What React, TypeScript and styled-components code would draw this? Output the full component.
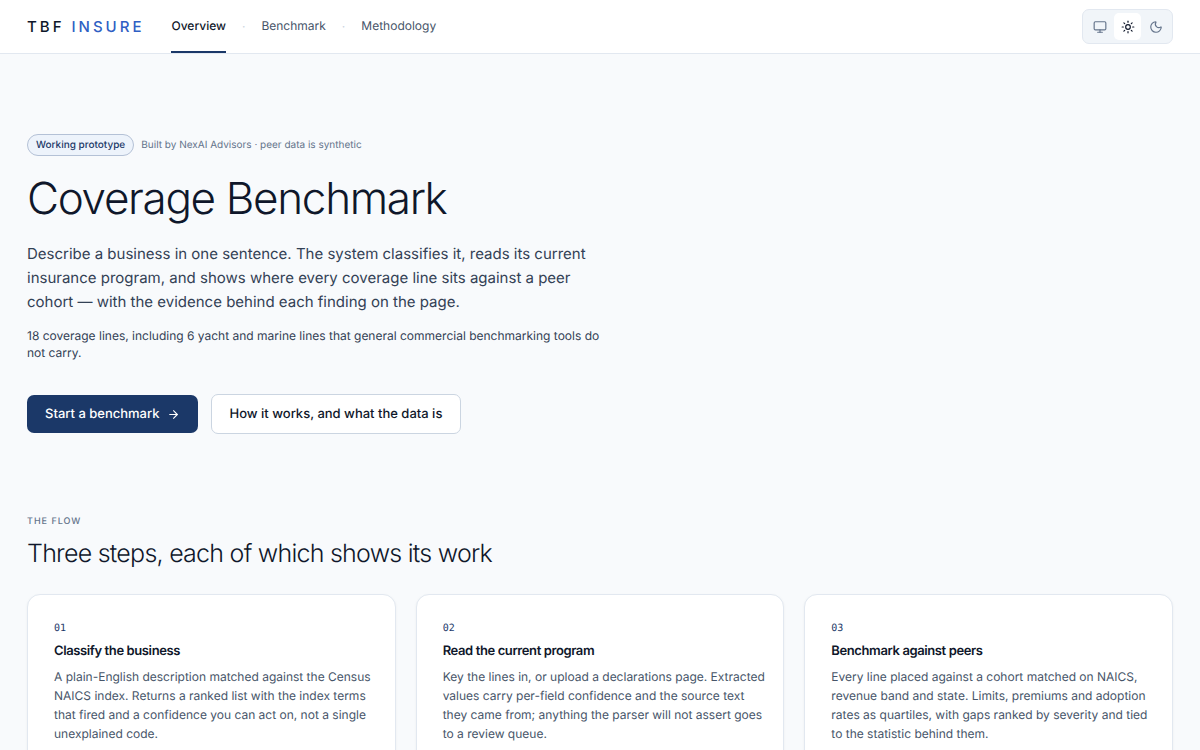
import React, { useState } from "react";
import styled, { createGlobalStyle } from "styled-components";
import { ArrowRight, Monitor, Moon, Sun } from "lucide-react";

const GlobalStyle = createGlobalStyle`
  *, *::before, *::after { box-sizing: border-box; }
  body {
    margin: 0;
    background: #f8fafc;
    color: #0f172a;
    font-family: Inter, "Liberation Sans", sans-serif;
    font-size: 12px;
    text-rendering: geometricPrecision;
  }
  h1, h2, h3, p { margin: 0; }
  h1, h2, h3 { letter-spacing: -0.03em; }
  a { color: inherit; text-decoration: none; }
`;

const Header = styled.header`
  display: flex;
  align-items: stretch;
  height: 54px;
  padding: 0 27px;
  background: #ffffff;
  border-bottom: 1px solid #e2e8f0;
`;

const Brand = styled.a`
  display: flex;
  align-items: center;
  gap: 7px;
  margin-right: 27px;
  font-size: 15px;
  font-weight: 500;
  letter-spacing: 3px;
`;

const BrandAccent = styled.span`
  color: #2f5fc4;
`;

const Nav = styled.nav`
  display: flex;
  align-items: stretch;
  gap: 16px;
`;

const NavLink = styled.a<{ $active?: boolean }>`
  display: flex;
  align-items: center;
  border-bottom: 2px solid ${(p) => (p.$active ? "#1b3868" : "transparent")};
  color: ${(p) => (p.$active ? "#0f172a" : "#475569")};
  font-size: 12px;
  font-weight: ${(p) => (p.$active ? 500 : 400)};
`;

const NavDot = styled.span`
  align-self: center;
  color: #cbd5e1;
`;

const ThemeSwitch = styled.div`
  display: flex;
  align-self: center;
  gap: 1px;
  margin-left: auto;
  padding: 3px;
  border: 1px solid #e2e8f0;
  border-radius: 7px;
  background: #f1f5f9;
`;

const ThemeButton = styled.button<{ $active: boolean }>`
  display: flex;
  align-items: center;
  justify-content: center;
  width: 27px;
  height: 27px;
  padding: 0;
  border: 0;
  border-radius: 5px;
  background: ${(p) => (p.$active ? "#ffffff" : "transparent")};
  color: ${(p) => (p.$active ? "#0f172a" : "#64748b")};
  cursor: pointer;
`;

const Main = styled.main`
  padding: 80px 27px;
`;

const Hero = styled.section`
  max-width: 580px;
  margin-bottom: 81px;
`;

const Notice = styled.div`
  display: flex;
  align-items: center;
  gap: 7px;
  color: #64748b;
  font-size: 10px;
  line-height: 14px;
`;

const Pill = styled.span`
  padding: 3px 8px;
  border: 1px solid #b4c1d6;
  border-radius: 11px;
  background: #edf3fb;
  color: #1b3868;
  font-weight: 500;
`;

const Title = styled.h1`
  margin-top: 18px;
  font-size: 44px;
  font-weight: 300;
  line-height: 48px;
`;

const Lead = styled.p`
  margin-top: 20px;
  color: #334155;
  font-size: 15px;
  line-height: 24px;
`;

const Note = styled.p`
  margin-top: 13px;
  color: #334155;
  line-height: 17px;
`;

const Actions = styled.div`
  display: flex;
  align-items: center;
  gap: 13px;
  margin-top: 33px;
`;

const ActionLink = styled.a<{ $primary?: boolean }>`
  display: flex;
  align-items: center;
  gap: 7px;
  padding: 10px 18px;
  border: ${(p) => (p.$primary ? "0" : "1px solid #cbd5e1")};
  border-radius: 7px;
  background: ${(p) => (p.$primary ? "#1b3868" : "#ffffff")};
  color: ${(p) => (p.$primary ? "#ffffff" : "#0f172a")};
  font-size: 13px;
  font-weight: 500;
  line-height: 18px;
`;

const Eyebrow = styled.p`
  color: #64748b;
  font-size: 9px;
  font-weight: 500;
  line-height: 14px;
  letter-spacing: 1px;
`;

const SectionTitle = styled.h2`
  margin-top: 8px;
  font-size: 25px;
  font-weight: 300;
  line-height: 34px;
`;

const Steps = styled.div`
  display: grid;
  grid-template-columns: repeat(3, 1fr);
  gap: 20px;
  margin-top: 23px;
`;

const Card = styled.article`
  padding: 26px 16px 26px 26px;
  border: 1px solid #e2e8f0;
  border-radius: 13px;
  background: #ffffff;
  box-shadow: 0 1px 3px rgba(15, 23, 42, 0.05);
`;

const StepNumber = styled.p`
  color: #1b3868;
  font-family: "DejaVu Sans Mono", monospace;
  font-size: 10px;
  line-height: 16px;
`;

const CardTitle = styled.h3`
  margin-top: 5px;
  font-size: 13px;
  font-weight: 600;
  line-height: 18px;
`;

const CardText = styled.p`
  margin-top: 7px;
  color: #475569;
  line-height: 19px;
`;

const themes = [
  { name: "System theme", Icon: Monitor },
  { name: "Light theme", Icon: Sun },
  { name: "Dark theme", Icon: Moon },
];

const steps = [
  {
    number: "01",
    title: "Classify the business",
    text: "A plain-English description matched against the Census NAICS index. Returns a ranked list with the index terms that fired and a confidence you can act on, not a single unexplained code.",
  },
  {
    number: "02",
    title: "Read the current program",
    text: "Key the lines in, or upload a declarations page. Extracted values carry per-field confidence and the source text they came from; anything the parser will not assert goes to a review queue.",
  },
  {
    number: "03",
    title: "Benchmark against peers",
    text: "Every line placed against a cohort matched on NAICS, revenue band and state. Limits, premiums and adoption rates as quartiles, with gaps ranked by severity and tied to the statistic behind them.",
  },
];

export default function App() {
  const [theme, setTheme] = useState("Light theme");

  return (
    <>
      <GlobalStyle />
      <Header>
        <Brand href="#">
          <span>TBF</span>
          <BrandAccent>INSURE</BrandAccent>
        </Brand>
        <Nav>
          <NavLink href="#overview" $active aria-current="page">Overview</NavLink>
          <NavDot aria-hidden="true">·</NavDot>
          <NavLink href="#benchmark">Benchmark</NavLink>
          <NavDot aria-hidden="true">·</NavDot>
          <NavLink href="#methodology">Methodology</NavLink>
        </Nav>
        <ThemeSwitch role="group" aria-label="Theme">
          {themes.map(({ name, Icon }) => (
            <ThemeButton
              key={name}
              type="button"
              aria-label={name}
              aria-pressed={theme === name}
              $active={theme === name}
              onClick={() => setTheme(name)}
            >
              <Icon size={14} strokeWidth={2} />
            </ThemeButton>
          ))}
        </ThemeSwitch>
      </Header>
      <Main>
        <Hero id="overview">
          <Notice>
            <Pill>Working prototype</Pill>
            <span>Built by NexAI Advisors · peer data is synthetic</span>
          </Notice>
          <Title>Coverage Benchmark</Title>
          <Lead>
            Describe a business in one sentence. The system classifies it, reads its current
            insurance program, and shows where every coverage line sits against a peer
            cohort — with the evidence behind each finding on the page.
          </Lead>
          <Note>
            18 coverage lines, including 6 yacht and marine lines that general commercial
            benchmarking tools do not carry.
          </Note>
          <Actions>
            <ActionLink href="#benchmark" $primary>
              Start a benchmark
              <ArrowRight size={13} strokeWidth={2} />
            </ActionLink>
            <ActionLink href="#methodology">How it works, and what the data is</ActionLink>
          </Actions>
        </Hero>
        <section>
          <Eyebrow>THE FLOW</Eyebrow>
          <SectionTitle>Three steps, each of which shows its work</SectionTitle>
          <Steps>
            {steps.map((step) => (
              <Card key={step.number}>
                <StepNumber>{step.number}</StepNumber>
                <CardTitle>{step.title}</CardTitle>
                <CardText>{step.text}</CardText>
              </Card>
            ))}
          </Steps>
        </section>
      </Main>
    </>
  );
}
